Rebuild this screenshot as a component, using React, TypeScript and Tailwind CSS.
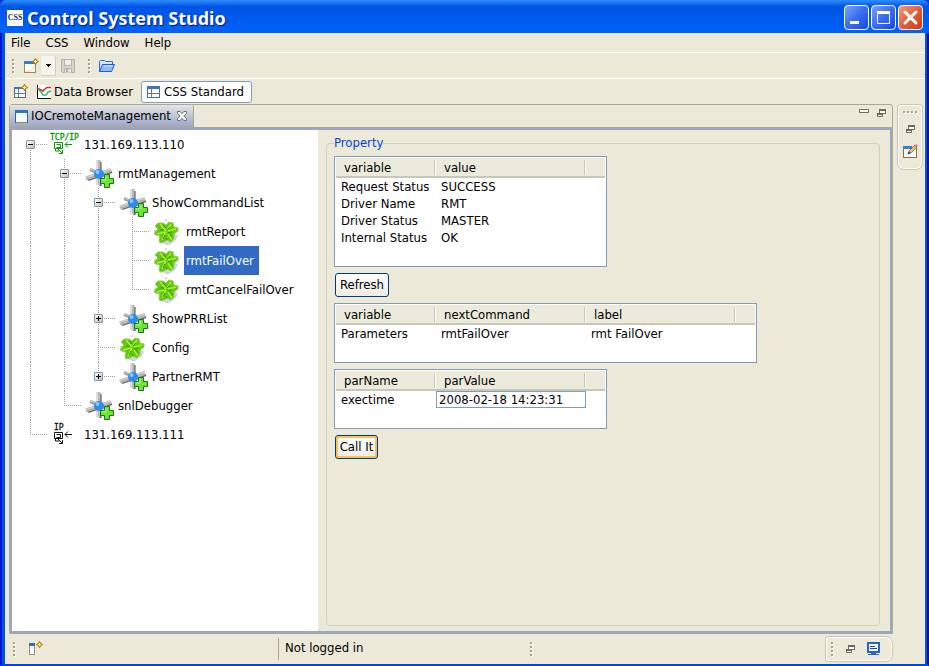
import React from "react";

type SvgProps = { children: React.ReactNode; w?: number; h?: number };

function Pic({ children, w = 16, h = 16 }: SvgProps) {
  return (
    <svg width={w} height={h} viewBox={`0 0 ${w} ${h}`} aria-hidden="true" className="block shrink-0">
      {children}
    </svg>
  );
}

const Spark = ({ x, y }: { x: number; y: number }) => (
  <g transform={`translate(${x} ${y})`}>
    <path d="M3.500 0L5 2.500L7 3.500L5 4.500L3.500 7L2 4.500L0 3.500L2 2.500Z" fill="#b8860b" stroke="#b8860b" strokeWidth=".6" />
    <path d="M3.500 2v3M2 3.500h3" stroke="#fff6c8" strokeWidth="1" />
  </g>
);

const NewWizardIcon = () => (
  <Pic>
    <rect x="1.500" y="4.500" width="11" height="10" fill="#f4faff" stroke="#a08a50" />
    <rect x="1" y="3" width="12" height="3" fill="#3a7cc0" />
    <path d="M3 13.500C8 13.500 10.500 11 11 8" stroke="#f2d98a" fill="none" />
    <Spark x={9} y={0} />
  </Pic>
);

const SaveIcon = () => (
  <Pic>
    <path d="M1.500 1.500h13v13h-12l-1-1z" fill="#d8d6cc" stroke="#b4b2a8" />
    <rect x="4.500" y="1.500" width="7" height="6" fill="#f1f0ea" stroke="#b4b2a8" />
    <path d="M4.500 14.500v-4h7v4" fill="#e8e7e0" stroke="#b4b2a8" />
    <rect x="6" y="11" width="2" height="3" fill="#b4b2a8" />
  </Pic>
);

const FolderIcon = () => (
  <Pic>
    <path d="M.5 13.500v-10l1-1h4l1 1h7v3" fill="#d4e6fc" stroke="#2b6ad0" />
    <path d="M.5 13.500l3-7h12l-3 7z" fill="#8dbbf2" stroke="#1f5ccc" />
    <path d="M4.500 8h9" stroke="#d6e8ff" />
  </Pic>
);

const OpenPerspectiveIcon = () => (
  <Pic>
    <rect x="1.500" y="3.500" width="11" height="10" fill="#f6fbff" stroke="#5a6a80" />
    <rect x="1" y="3" width="9" height="2" fill="#3a7cc0" />
    <path d="M5.500 5v8M2 9.500h10" stroke="#5a7ca8" />
    <Spark x={8} y={0} />
  </Pic>
);

const ChartIcon = () => (
  <Pic>
    <rect x="1" y="1" width="14" height="13" fill="#fff" />
    <path d="M1.500 1v13.500H15" fill="none" stroke="#111" />
    <path d="M1 4l3 1.500 3 1.500 2-2 2-1.500h4" fill="none" stroke="#dc2626" strokeWidth="1.500" />
    <path d="M2 5l3 3 2 3h3l2-3 3-1" fill="none" stroke="#2fc078" strokeWidth="1.500" />
  </Pic>
);

const PerspectiveIcon = () => (
  <Pic>
    <rect x="1.500" y="2.500" width="12" height="11" fill="#f8fcff" stroke="#4a6f9c" />
    <rect x="1" y="2" width="13" height="3" fill="#3a78b8" />
    <path d="M5.500 5v9M6 9.500h8M2 9.500h3" stroke="#77756a" />
  </Pic>
);

const ViewIcon = () => (
  <Pic w={13} h={13}>
    <rect x=".5" y=".5" width="12" height="12" fill="#f2faff" stroke="#2d65a8" />
    <rect x="0" y="0" width="13" height="3" fill="#2f75bc" />
    <path d="M1 12.500h11" stroke="#9b8a50" />
  </Pic>
);

const RestoreIcon = () => (
  <Pic w={9} h={9}>
    <path d="M2.500 0v4M8.500 0v5M6 4.500h3" fill="none" stroke="#6b6960" />
    <path d="M2 1h7M0 5h6" stroke="#6b6960" strokeWidth="2" />
    <path d="M1 6h4v1H1zM3 2h5v2H3z" fill="#fff" />
    <path d="M.5 5v2.500h5V5" fill="none" stroke="#6b6960" />
  </Pic>
);

const EditIcon = () => (
  <Pic>
    <rect x="1.500" y="4.500" width="13" height="10" fill="#f0faff" stroke="#8a7434" />
    <rect x="1" y="3" width="9" height="3" fill="#3580c8" />
    <path d="M6 11l1-3 6-6 2 2-6 6z" fill="#f0c080" stroke="#7a5426" strokeWidth=".7" />
    <path d="M12 3l2-2 2 2-2 2z" fill="#d88080" />
    <path d="M6 11l1-2.500 1.500 1.500z" fill="#222" />
  </Pic>
);

const FastViewIcon = () => (
  <Pic>
    <rect x="1.500" y="3.500" width="5" height="10" fill="#f0faff" stroke="#9b9068" />
    <rect x="1" y="2" width="6" height="3" fill="#2f6cb0" />
    <Spark x={8} y={0} />
  </Pic>
);

const ConsoleIcon = () => (
  <Pic>
    <rect x="2" y="1" width="13" height="11" fill="#2a64b4" />
    <rect x="4" y="3" width="9" height="7" fill="#eef6ff" />
    <path d="M5 5.500h5M5 7.500h7" stroke="#224a8a" />
    <path d="M3 13.500h11M6 12.500h5" stroke="#2a64b4" />
  </Pic>
);

const NodeIcon = () => (
  <Pic w={32} h={29}>
    <g fill="none">
      <path d="M16.500 3v24" stroke="#4a4a4a" strokeWidth="2" />
      <path d="M14.500 1v25" stroke="#b9b9b9" strokeWidth="4" />
      <path d="M13.500 1v25" stroke="#dedede" strokeWidth="1" />
      <path d="M4 21L28 13" stroke="#5c5c5c" strokeWidth="2" />
      <path d="M2 19.500L27 11" stroke="#b4b4b4" strokeWidth="4" />
      <path d="M2 18.500L27 10" stroke="#dcdcdc" strokeWidth="1" />
      <path d="M6 10.500L24 18" stroke="#9a9a9a" strokeWidth="3" />
      <path d="M6 10L23 17" stroke="#d0d0d0" strokeWidth="1" />
    </g>
    <circle cx="15" cy="15" r="5" fill="#2c8cec" />
    <circle cx="13.500" cy="13" r="2" fill="#8cc8ff" />
    <path d="M20.500 15.500h5v4h4v5h-4v4h-5v-4h-4v-5h4z" fill="#6fe23a" stroke="#137a10" />
    <path d="M22 17v4h-4" stroke="#b9f58f" fill="none" />
  </Pic>
);

const LeafIcon = () => (
  <Pic w={32} h={29}>
    <path d="M7 24l5 3 5 1 6-4 3-5-4-3-5 5z" fill="#d2d2ea" />
    <path
      d="M6 6l5 0 3 2 3-3 4 1 1 4 4 1 0 3-4 3 0 5-3 3-4-2-3 2-4 1-1-3 1-4-4-1-2-1 2-3 2-2-3-3z"
      fill="#66c910"
      stroke="#8fce50"
      strokeWidth="1"
    />
    <path d="M8 7l6 7M19 7l-4 6M14 15l-4 8M16 17l4 6M5 17l8-2M24 12l-8 2" stroke="#aeee30" strokeWidth="1.500" fill="none" />
    <path d="M11 8l3 3M18 10l-3 3M8 13l4 0M20 15l-4 1M13 18l-2 4M18 17l2 3M14 21l1 2" stroke="#259606" fill="none" />
    <path d="M14 2v2M2 14h2M15 27v1" stroke="#9bc46a" />
  </Pic>
);

const IpIcon = ({ label, color, x }: { label: string; color: string; x: number }) => (
  <Pic w={32} h={29}>
    <text x={x} y="10" fontSize="8" fill={color} stroke={color} strokeWidth=".3" className="font-['DejaVu_Sans_Mono',monospace]">
      {label}
    </text>
    <g fill="none" stroke={color}>
      <path d="M4.500 12.500h8v6h-8zM6.500 14.500h4v3h-4M5.500 18v3h4" />
      <path d="M15 14.500h7M18 11.500l-3 3 3 3M8 19l4 4M12.500 20v3.500h-3.500" />
    </g>
  </Pic>
);

type Kind = "tcp" | "ip" | "node" | "leaf";
type TreeNode = {
  name: string;
  kind: Kind;
  open?: boolean;
  expander?: boolean;
  selected?: boolean;
  children?: TreeNode[];
};

const tree: TreeNode[] = [
  {
    name: "131.169.113.110",
    kind: "tcp",
    open: true,
    expander: true,
    children: [
      {
        name: "rmtManagement",
        kind: "node",
        open: true,
        expander: true,
        children: [
          {
            name: "ShowCommandList",
            kind: "node",
            open: true,
            expander: true,
            children: [
              { name: "rmtReport", kind: "leaf" },
              { name: "rmtFailOver", kind: "leaf", selected: true },
              { name: "rmtCancelFailOver", kind: "leaf" },
            ],
          },
          { name: "ShowPRRList", kind: "node", expander: true },
          { name: "Config", kind: "leaf" },
          { name: "PartnerRMT", kind: "node", expander: true },
        ],
      },
      { name: "snlDebugger", kind: "node" },
    ],
  },
  { name: "131.169.113.111", kind: "ip" },
];

function NodeGlyph({ kind }: { kind: Kind }) {
  if (kind === "tcp") return <IpIcon label="TCP/IP" color="#0a960a" x={0} />;
  if (kind === "ip") return <IpIcon label="IP" color="#111111" x={4} />;
  return kind === "node" ? <NodeIcon /> : <LeafIcon />;
}

function Guide({ up, down, across }: { up: boolean; down: boolean; across: boolean }) {
  return (
    <svg width="34" height="29" aria-hidden="true" className="block shrink-0" shapeRendering="crispEdges">
      <g stroke="#a09f8c" strokeDasharray="1 1" fill="none">
        {up && <path d="M17.500 0v15" />}
        {down && <path d="M17.500 14v15" />}
        {across && <path d="M17 14.500h17" />}
      </g>
    </svg>
  );
}

function Branch({ nodes, rails }: { nodes: TreeNode[]; rails: boolean[] }) {
  return (
    <ul role={rails.length ? "group" : "tree"} aria-label={rails.length ? undefined : "IOC tree"}>
      {nodes.map((n, i) => {
        const last = i === nodes.length - 1;
        return (
          <li key={n.name} role="treeitem" aria-selected={!!n.selected} aria-expanded={n.expander ? !!n.open : undefined}>
            <div className="flex h-[29px] items-center">
              {rails.map((on, k) => (
                <Guide key={k} up={on} down={on} across={false} />
              ))}
              <span className="relative shrink-0">
                <Guide up={rails.length > 0 || i > 0} down={!last} across />
                {n.expander && (
                  <button
                    type="button"
                    aria-label={`${n.open ? "Collapse" : "Expand"} ${n.name}`}
                    className="absolute top-[10px] left-[13px] size-[9px] rounded-[1px] border border-[#7898b5] bg-linear-to-br from-white to-[#c8c0b0]"
                  >
                    <svg width="7" height="7" className="block" shapeRendering="crispEdges">
                      <path d={n.open ? "M1 3.500h5" : "M1 3.500h5M3.500 1v5"} stroke="#000" />
                    </svg>
                  </button>
                )}
              </span>
              <span className="ml-[3px] shrink-0">
                <NodeGlyph kind={n.kind} />
              </span>
              <span
                className={
                  n.selected
                    ? "flex h-full items-center bg-[#316ac5] pr-[5px] pl-[2px] whitespace-nowrap text-white"
                    : "pl-[2px] whitespace-nowrap"
                }
              >
                {n.name}
              </span>
            </div>
            {n.children && n.open && <Branch nodes={n.children} rails={[...rails, !last]} />}
          </li>
        );
      })}
    </ul>
  );
}

type GridProps = { label: string; box: string; heads: string[]; rows: React.ReactNode[][] };

function Grid({ label, box, heads, rows }: GridProps) {
  return (
    <div className={`${box} max-w-full border border-[#7f9db9] bg-white px-px pt-px`}>
      <table aria-label={label} className="w-full table-fixed border-collapse text-left">
        <thead>
          <tr className="h-[19px] border-b-2 border-[#cbc7b8] bg-[#ebeadb]">
            {heads.map((h, i) => (
              <th
                key={h}
                scope="col"
                className={`${i === 0 ? "w-[100px]" : "w-[150px]"} p-0 pt-px font-normal`}
              >
                <span className="mr-px block border-r border-[#c7c5b2] pl-2 leading-[15px] shadow-[1px_0_0_#fff]">{h}</span>
              </th>
            ))}
            <td className="p-0" />
          </tr>
        </thead>
        <tbody>
          {rows.map((r, i) => (
            <tr key={i} className="h-[17px] leading-[17px]">
              {r.map((c, k) => (
                <td key={k} className="p-0 whitespace-nowrap">
                  {typeof c === "string" ? <span className="pl-[5px]">{c}</span> : c}
                </td>
              ))}
            </tr>
          ))}
        </tbody>
      </table>
    </div>
  );
}

const Grip = () => (
  <span aria-hidden="true" className="flex shrink-0 flex-col gap-[2px]">
    {[0, 1, 2, 3].map((k) => (
      <span key={k} className="size-[2px] bg-[#a5a294] shadow-[1px_1px_0_#fff]" />
    ))}
  </span>
);

const captionBtn =
  "flex size-[25px] items-center justify-center rounded-[4px] border border-white bg-linear-to-br";
const pushBtn =
  "ml-px h-[24px] rounded-[3px] border border-[#003c74] bg-linear-to-b from-white to-[#ecebe5] text-center whitespace-nowrap";

export default function App() {
  return (
    <div className="flex min-h-screen flex-col bg-[#0831d9] font-['DejaVu_Sans_Condensed','DejaVu_Sans',sans-serif] text-[13px] leading-[16px] text-black">
      <header className="flex h-[33px] items-center rounded-t-[6px] bg-linear-to-b from-[#2f8cff] via-[#0054e3] via-20% to-[#0062fb] pt-[2px] pr-[6px] pl-[7px]">
        <span
          aria-hidden="true"
          className="flex size-[16px] shrink-0 items-center justify-center overflow-hidden bg-white font-['Liberation_Serif',serif] text-[8px] font-bold text-[#2a2a60]"
        >
          CSS
        </span>
        <h1 className="ml-1 font-['Noto_Sans','Open_Sans',sans-serif] text-[18px] leading-[24px] font-bold whitespace-nowrap text-white [text-shadow:1px_1px_1px_#0a1883]">
          Control System Studio
        </h1>
        <div className="ml-auto flex gap-[2px]">
          <button type="button" aria-label="Minimize" className={`${captionBtn} from-[#7ba2f7] via-[#3a6cf0] to-[#0c4ce0]`}>
            <svg width="15" height="15"><path d="M1 12.500h9" stroke="#fff" strokeWidth="3" /></svg>
          </button>
          <button type="button" aria-label="Maximize" className={`${captionBtn} from-[#7ba2f7] via-[#3a6cf0] to-[#0c4ce0]`}>
            <svg width="15" height="15">
              <path d="M1.500 1.500h12v12h-12z" fill="none" stroke="#fff" />
              <path d="M1 2.500h13" stroke="#fff" strokeWidth="3" />
            </svg>
          </button>
          <button type="button" aria-label="Close" className={`${captionBtn} from-[#f09a80] via-[#e45c38] to-[#d03a10]`}>
            <svg width="17" height="17"><path d="M3 3l11 11M14 3L3 14" stroke="#fff" strokeWidth="3" strokeLinecap="round" /></svg>
          </button>
        </div>
      </header>

      <div className="flex flex-1 border-x-2 border-b-2 border-r-[#00138c] border-b-[#0046e0] border-l-[#0019cf] bg-[#0650e0] pr-[2px] pl-[3px]">
        <div className="flex min-w-0 flex-1 flex-col bg-[#ece9d8]">
          <nav aria-label="Main menu" className="flex h-[20px] items-center gap-[3px] border-b border-white">
            {["File", "CSS", "Window", "Help"].map((m) => (
              <button key={m} type="button" className="px-[6px]">
                {m}
              </button>
            ))}
          </nav>

          <div role="toolbar" aria-label="Main toolbar" className="flex h-[26px] items-center border-b border-white pl-[7px]">
            <Grip />
            <button type="button" aria-label="New" className="ml-[9px]"><NewWizardIcon /></button>
            <button
              type="button"
              aria-label="New menu"
              className="ml-[2px] flex h-[20px] w-[15px] items-center justify-center rounded-[2px] border-r border-b border-[#d0cdbf] bg-[#f6f5ef]"
            >
              <svg width="5" height="3" shapeRendering="crispEdges"><path d="M0 0h5v1H4v1H3v1H2V2H1V1H0z" /></svg>
            </button>
            <button type="button" aria-label="Save" className="ml-1"><SaveIcon /></button>
            <span className="ml-3"><Grip /></span>
            <button type="button" aria-label="Open" className="ml-[9px]"><FolderIcon /></button>
          </div>

          <div role="toolbar" aria-label="Perspectives" className="flex h-[25px] items-center pl-2">
            <button type="button" aria-label="Open perspective"><OpenPerspectiveIcon /></button>
            <button type="button" className="ml-[7px] flex items-center gap-[2px] whitespace-nowrap">
              <ChartIcon />
              Data Browser
            </button>
            <button
              type="button"
              className="ml-2 flex h-[22px] items-center gap-[2px] rounded-[3px] border border-[#7f9db9] bg-white pr-[7px] pl-1 whitespace-nowrap"
            >
              <PerspectiveIcon />
              CSS Standard
            </button>
          </div>

          <div className="flex flex-1 pr-[2px] pl-1">
            <section aria-label="IOCremoteManagement" className="flex min-w-0 flex-1 flex-col rounded-t-[3px] border border-[#aca899]">
              <div className="flex h-[23px] items-stretch border-b border-[#aca899]">
                <div className="flex items-center rounded-tr-[2px] border-r border-[#aca899] bg-linear-to-b from-[#e4e4e4] to-[#9ca5c6] pr-[6px] pl-[5px] whitespace-nowrap">
                  <ViewIcon />
                  <span className="ml-[3px]">IOCremoteManagement</span>
                  <button type="button" aria-label="Close view" className="ml-[6px]">
                    <svg width="10" height="10" viewBox="0 0 11 11" className="block">
                      <path
                        d="M.5 .5h3l2 2.500 2-2.500h3v2l-3 3 3 3v2h-3l-2-2.500-2 2.500h-3v-2l3-3-3-3z"
                        fill="#f6f6f6"
                        stroke="#66655c"
                      />
                    </svg>
                  </button>
                </div>
                <div className="ml-auto flex items-start gap-2 pt-1 pr-[6px]">
                  <button type="button" aria-label="Minimize view">
                    <svg width="10" height="4" className="block"><path d="M.5 .5h9v3h-9z" fill="#fff" stroke="#6b6960" /></svg>
                  </button>
                  <button type="button" aria-label="Restore view"><RestoreIcon /></button>
                </div>
              </div>

              <div className="flex flex-1 border-2 border-[#9ca5c6]">
                <div className="w-[306px] shrink-0 bg-white pl-px">
                  <Branch nodes={tree} rails={[]} />
                </div>
                <div className="flex min-w-0 flex-1 pt-[5px] pr-[10px] pb-[5px] pl-2">
                  <fieldset className="min-w-0 flex-1 rounded-[4px] border border-[#d0d0bf] px-[7px] pt-[5px]">
                    <legend className="text-[#0046d5]">Property</legend>
                    <div className="flex flex-col items-start gap-[6px]">
                      <Grid
                        label="Status"
                        box="w-[273px] min-h-[111px]"
                        heads={["variable", "value"]}
                        rows={[
                          ["Request Status", "SUCCESS"],
                          ["Driver Name", "RMT"],
                          ["Driver Status", "MASTER"],
                          ["Internal Status", "OK"],
                        ]}
                      />
                      <button type="button" className={`${pushBtn} w-[54px]`}>
                        Refresh
                      </button>
                      <Grid
                        label="Commands"
                        box="w-[423px] min-h-[60px]"
                        heads={["variable", "nextCommand", "label"]}
                        rows={[["Parameters", "rmtFailOver", "rmt FailOver"]]}
                      />
                      <Grid
                        label="Command parameters"
                        box="w-[273px] min-h-[60px]"
                        heads={["parName", "parValue"]}
                        rows={[
                          [
                            "exectime",
                            <input
                              key="time"
                              type="text"
                              aria-label="exectime"
                              defaultValue="2008-02-18 14:23:31"
                              className="block h-[17px] w-full border border-[#7f9db9] bg-white pl-[2px] leading-[15px] outline-none"
                            />,
                          ],
                        ]}
                      />
                      <button
                        type="button"
                        className={`${pushBtn} w-[43px] shadow-[inset_0_0_0_2px_#f9c35c]`}
                      >
                        Call It
                      </button>
                    </div>
                  </fieldset>
                </div>
              </div>
            </section>

            <aside aria-label="Fast views" className="ml-1 shrink-0">
              <div className="flex h-[66px] w-[26px] flex-col items-center rounded-[3px] rounded-b-[7px] border border-[#cac7b8] pt-[6px] shadow-[inset_0_0_0_1px_#fff]">
                <span aria-hidden="true" className="flex gap-[2px]">
                  {[0, 1, 2, 3].map((k) => (
                    <span key={k} className="size-[2px] bg-[#a5a294] shadow-[1px_1px_0_#fff]" />
                  ))}
                </span>
                <button type="button" aria-label="Restore" className="mt-[12px]"><RestoreIcon /></button>
                <button type="button" aria-label="Editor" className="mt-[9px]"><EditIcon /></button>
              </div>
            </aside>
          </div>

          <footer className="flex h-[30px] items-center pl-2">
            <Grip />
            <button type="button" aria-label="Show view as fast view" className="ml-[13px]"><FastViewIcon /></button>
            <div className="ml-[234px] flex h-[22px] w-[252px] shrink-0 items-center border-l border-[#aca899] pb-[2px] pl-[6px]">
              Not logged in
            </div>
            <Grip />
            <div className="mr-[32px] ml-auto flex h-[26px] w-[68px] items-center rounded-[3px] rounded-r-[7px] border border-[#cac7b8] pl-[5px] shadow-[inset_0_0_0_1px_#fff]">
              <Grip />
              <button type="button" aria-label="Restore console" className="ml-[13px]"><RestoreIcon /></button>
              <button type="button" aria-label="Console" className="ml-[10px]"><ConsoleIcon /></button>
            </div>
          </footer>
        </div>
      </div>
    </div>
  );
}
